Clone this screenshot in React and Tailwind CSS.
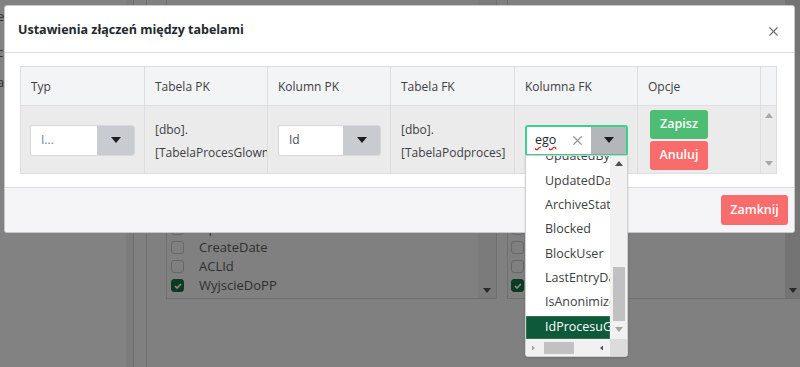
import { X } from 'lucide-react';

const font = { fontFamily: '"Open Sans", "Noto Sans", sans-serif' };

function Caret({ className = '' }) {
  return (
    <svg width="10" height="6" viewBox="0 0 10 6" className={className}>
      <path d="M0 0 L10 0 L5 6 Z" fill="currentColor" />
    </svg>
  );
}

function Check({ checked }) {
  return (
    <div
      className={`w-[13px] h-[13px] shrink-0 rounded-[3px] border flex items-center justify-center ${
        checked ? 'bg-[#0c3a25] border-[#0c3a25]' : 'border-[#676767]'
      }`}
    >
      {checked && (
        <svg width="8" height="6" viewBox="0 0 8 6">
          <path d="M1 3 L3 5 L7 1" stroke="#8a8a8a" strokeWidth="1.6" fill="none" />
        </svg>
      )}
    </div>
  );
}

function Background() {
  const rows = [
    { label: 'UpdatedOn', checked: false },
    { label: 'CreateDate', checked: false },
    { label: 'ACLId', checked: false },
    { label: 'WyjscieDoPP', checked: true },
    { label: 'UpdatedBy', checked: false },
  ];
  return (
    <div className="w-[800px] h-[367px] bg-[#808080] flex overflow-hidden">
      <div className="w-[126px] shrink-0 bg-[#828282] text-[13px] text-[#303030] leading-none pt-[10px]">
        <div className="h-[36px] -ml-[3px]">e</div>
        <div className="h-[30px] -ml-[3px]">c</div>
        <div className="-ml-[3px]">a</div>
      </div>
      <div className="w-[8px] shrink-0 bg-[#7c7c7c] border-r border-[#6e6e6e]" />
      <div className="w-[13px] shrink-0 border-r border-[#6e6e6e]" />
      <div className="flex-1 flex gap-[10px] pl-[19px]">
        <div className="w-[331px] h-[299px] border border-t-0 border-[#6f6f6f] flex overflow-hidden">
          <div className="flex-1 flex flex-col pl-[4px] pt-[219px] overflow-hidden">
            {rows.map((r, i) => (
              <div key={i} className="h-[19px] shrink-0 flex items-center gap-[15px] text-[13px] text-[#2f2f2f]">
                <Check checked={r.checked} />
                <span>{r.label}</span>
              </div>
            ))}
          </div>
          <div className="w-[18px] bg-[#7b7b7b] flex items-end justify-center pb-[5px] text-[#2a2a2a]">
            <Caret className="w-[8px] h-[5px]" />
          </div>
        </div>
        <div className="flex-1 h-[299px] border border-t-0 border-r-0 border-[#6f6f6f] flex overflow-hidden">
          <div className="flex-1 flex flex-col pl-[3px] pt-[219px]">
            {[false, false, false, true, false].map((c, i) => (
              <div key={i} className="h-[19px] shrink-0 flex items-center">
                <Check checked={c} />
              </div>
            ))}
          </div>
          <div className="w-[15px] bg-[#747474] flex items-end justify-center pb-[5px] text-[#2a2a2a]">
            <Caret className="w-[8px] h-[5px]" />
          </div>
        </div>
      </div>
    </div>
  );
}

function SelectBox({ value, className = '' }) {
  return (
    <div className={`h-[31px] flex rounded-[3px] border border-[#d6d8db] overflow-hidden ${className}`}>
      <div className="flex-1 bg-white px-[10px] flex items-center text-[12px] text-[#73818f]">{value}</div>
      <div className="w-[37px] bg-[#c8ccd1] flex items-center justify-center text-[#1e1e1e]">
        <Caret />
      </div>
    </div>
  );
}

const cols = ['Typ', 'Tabela PK', 'Kolumn PK', 'Tabela FK', 'Kolumna FK', 'Opcje'];
const widths = ['w-[124px]', 'w-[123px]', 'w-[123px]', 'w-[124px]', 'w-[123px]', 'w-[123px]'];

function Dropdown() {
  const items = ['UpdatedDa', 'ArchiveStat', 'Blocked', 'BlockUser', 'LastEntryDa', 'IsAnonimize'];
  return (
    <div className="absolute left-[525px] top-[155px] w-[103px] h-[202px] bg-white border border-[#cfcfcf] rounded-b-[3px] shadow-sm flex flex-col text-[12.5px] text-[#3c4044]">
      <div className="flex h-[183px]">
        <div className="flex-1 overflow-hidden flex flex-col">
          <div className="h-[13px] shrink-0 overflow-hidden pl-[19px] leading-none">
            <div className="-mt-[6px] whitespace-nowrap">UpdatedBy</div>
          </div>
          {items.map((t) => (
            <div key={t} className="h-[24.3px] shrink-0 flex items-center pl-[19px] whitespace-nowrap">
              {t}
            </div>
          ))}
          <div className="h-[23px] shrink-0 mt-[1px] bg-[#0d5939] border border-[#2e7353] flex items-center pl-[18px] text-white whitespace-nowrap">
            IdProcesuGlownego
          </div>
        </div>
        <div className="w-[17px] bg-[#f1f1f1] flex flex-col items-center">
          <Caret className="w-[8px] h-[5px] rotate-180 text-[#505050] mt-[5px]" />
          <div className="flex-1" />
          <div className="w-[12px] h-[54px] bg-[#c1c1c1] mb-[6px]" />
          <Caret className="w-[8px] h-[5px] text-[#a3a3a3] mb-[7px]" />
        </div>
      </div>
      <div className="flex h-[17px]">
        <div className="flex-1 bg-[#f1f1f1] flex items-center px-[5px]">
          <Caret className="w-[5px] h-[8px] -rotate-90 text-[#a3a3a3]" />
          <div className="w-[30px] h-[12px] bg-[#c1c1c1] ml-[8px]" />
          <div className="flex-1" />
          <Caret className="w-[5px] h-[8px] rotate-90 text-[#505050] mr-[1px]" />
        </div>
        <div className="w-[17px] bg-[#dcdcdc]" />
      </div>
    </div>
  );
}

function Modal() {
  return (
    <div className="absolute left-[4px] top-[5px] w-[791px] bg-white rounded-[3px] border border-[#c8c8c8] overflow-hidden">
      <div className="h-[47px] flex items-center justify-between pl-[13px] pr-[13px] border-b border-[#d8dbe0]">
        <h5 className="text-[12.5px] font-bold text-[#23282c] pt-[3px]">Ustawienia złączeń między tabelami</h5>
        <X size={15} strokeWidth={1.8} className="text-[#6d6d6d] mt-[4px]" />
      </div>
      <div className="pt-[13px] pb-[13px] pl-[15px]">
        <div className="w-[757px] border border-[#dcdee1] flex flex-col">
          <div className="flex h-[38px] bg-[#f3f4f6] text-[12px] text-[#3c4044]">
            {cols.map((c, i) => (
              <div key={c} className={`${widths[i]} border-r border-[#dcdee1] flex items-center pl-[10px] pt-[1px]`}>
                {c}
              </div>
            ))}
            <div className="flex-1" />
          </div>
          <div className="flex h-[68px] bg-[#ebebeb] border-t border-[#dcdee1] text-[12px] text-[#3c4044]">
            <div className={`${widths[0]} border-r border-[#dcdee1] flex items-center pl-[9px] pr-[9px] pt-[1px]`}>
              <SelectBox value="I..." className="w-full" />
            </div>
            <div className={`${widths[1]} border-r border-[#dcdee1] flex flex-col justify-center pl-[10px] pt-[2px] overflow-hidden whitespace-nowrap leading-[23px]`}>
              <span>[dbo].</span>
              <span>[TabelaProcesGlownego]</span>
            </div>
            <div className={`${widths[2]} border-r border-[#dcdee1] flex items-center pl-[10px] pr-[9px] pt-[1px]`}>
              <SelectBox value={<span className="text-[#4a5057]">Id</span>} className="w-full" />
            </div>
            <div className={`${widths[3]} border-r border-[#dcdee1] flex flex-col justify-center pl-[10px] pt-[2px] overflow-hidden whitespace-nowrap leading-[23px]`}>
              <span>[dbo].</span>
              <span>[TabelaPodproces]</span>
            </div>
            <div className={`${widths[4]} border-r border-[#dcdee1] flex items-center pl-[10px] pr-[9px] pt-[1px]`}>
              <div className="w-full h-[31px] flex rounded-[3px] border-2 border-[#3ccf8e] overflow-hidden">
                <div className="flex-1 bg-white flex items-center pl-[8px] gap-[14px] text-[12.5px]">
                  <span className="text-[#23282c] underline decoration-wavy decoration-[#e02020] underline-offset-2">ego</span>
                  <X size={15} strokeWidth={2} className="text-[#9a9a9a]" />
                </div>
                <div className="w-[35px] bg-[#b3b7bc] flex items-center justify-center text-[#1e1e1e]">
                  <Caret />
                </div>
              </div>
            </div>
            <div className={`${widths[5]} border-r border-[#dcdee1] flex flex-col justify-center gap-[2px] pl-[12px] pt-[1px]`}>
              <button className="w-[58px] h-[29px] rounded-[3px] bg-[#4dbd74] text-white text-[12.5px] font-semibold">Zapisz</button>
              <button className="w-[58px] h-[29px] rounded-[3px] bg-[#f86c6b] text-white text-[12.5px] font-semibold">Anuluj</button>
            </div>
            <div className="flex-1 flex flex-col items-center justify-between py-[7px]">
              <Caret className="w-[8px] h-[5px] rotate-180 text-[#a8a8a8]" />
              <Caret className="w-[8px] h-[5px] text-[#a8a8a8]" />
            </div>
          </div>
        </div>
      </div>
      <div className="h-[45px] bg-[#f5f5f8] border-t border-[#d8dbe0] flex items-center justify-end pr-[6px]">
        <button className="w-[67px] h-[30px] rounded-[3px] bg-[#f86c6b] text-white text-[12.5px] font-semibold">Zamknij</button>
      </div>
    </div>
  );
}

export default function App() {
  return (
    <div className="relative w-[800px] h-[367px] overflow-hidden" style={font}>
      <Background />
      <Modal />
      <Dropdown />
    </div>
  );
}
